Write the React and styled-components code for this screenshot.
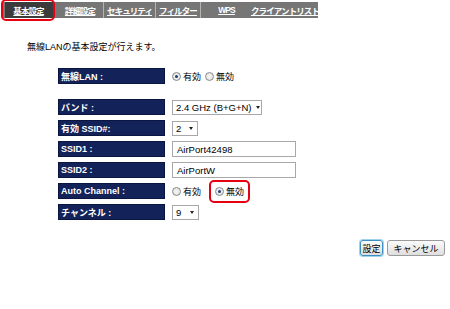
import React from "react";
import styled, { createGlobalStyle } from "styled-components";

const Global = createGlobalStyle`
  body {
    margin: 0;
    background: #fff;
    font-family: "Liberation Sans", "Noto Sans CJK JP", sans-serif;
    font-size: 9px;
    color: #000;
  }
`;

const Page = styled.div`
  width: 450px;
  height: 309px;
  position: relative;
  overflow: hidden;
`;

const TabBar = styled.div`
  display: flex;
  align-items: stretch;
  margin: 2px 0 0 3px;
  width: 315px;
  height: 16px;
  background: #767676;
`;

const Tab = styled.a`
  display: flex;
  align-items: center;
  justify-content: center;
  width: ${(p) => p.$w}px;
  flex: none;
  color: #fff;
  font-weight: bold;
  font-size: 8.5px;
  letter-spacing: -0.9px;
  text-decoration: underline;
  background: ${(p) => (p.$active ? "#3b3b3b" : "transparent")};
  border-right: 1px solid ${(p) => (p.$sep ? "#b4b4b4" : "transparent")};
  box-sizing: border-box;
  position: relative;
  white-space: nowrap;
  margin-left: ${(p) => p.$ml || 0}px;
`;

const Highlight = styled.span`
  position: absolute;
  left: -4px;
  top: -3px;
  right: -3px;
  bottom: -3px;
  border: 2px solid #e60012;
  border-radius: 5px;
`;

const Intro = styled.p`
  margin: 24px 0 0 27px;
  font-size: 9px;
  line-height: 11px;
`;

const Form = styled.div`
  margin: 15px 0 0 58px;
  display: grid;
  grid-template-columns: 107px auto;
  grid-template-rows: 16px 5px repeat(6, 16px);
  column-gap: 7px;
  row-gap: 5px;
  align-items: center;
`;

const Label = styled.div`
  height: 16px;
  background: #13235a;
  color: #fff;
  font-weight: bold;
  font-size: 9px;
  display: flex;
  align-items: center;
  padding-left: 2px;
  border: 1px solid #0a1540;
  box-sizing: border-box;
  white-space: nowrap;
`;

const Spacer = styled.div`
  grid-column: 1 / span 2;
`;

const Radios = styled.div`
  display: flex;
  align-items: center;
  gap: ${(p) => p.$gap || 4}px;
`;

const RadioLabel = styled.label`
  display: flex;
  align-items: center;
  gap: 2px;
  position: relative;
  font-size: 9px;
`;

const Dot = styled.span`
  width: 9px;
  height: 9px;
  border-radius: 50%;
  border: 1px solid #8a8a8a;
  background: radial-gradient(circle, #f6f6f6 0%, #dcdcdc 100%);
  box-sizing: border-box;
  display: flex;
  align-items: center;
  justify-content: center;
  &::after {
    content: "";
    width: 3px;
    height: 3px;
    border-radius: 50%;
    background: ${(p) => (p.$on ? "#1c3d7a" : "transparent")};
  }
`;

const RedBox = styled.span`
  position: absolute;
  left: -6px;
  top: -5px;
  right: -6px;
  bottom: -5px;
  border: 2px solid #e60012;
  border-radius: 5px;
`;

const Select = styled.div`
  height: 15px;
  width: ${(p) => p.$w}px;
  border: 1px solid #a8a8a8;
  background: #fff;
  box-sizing: border-box;
  display: flex;
  align-items: center;
  justify-content: space-between;
  gap: 4px;
  padding: 0 4px 0 3px;
  font-size: 9.5px;
  white-space: nowrap;
  &::after {
    content: "";
    flex: none;
    border-left: 2.5px solid transparent;
    border-right: 2.5px solid transparent;
    border-top: 3px solid #222;
  }
`;

const Input = styled.div`
  height: 16px;
  width: 124px;
  border: 1px solid #a8a8a8;
  box-sizing: border-box;
  display: flex;
  align-items: center;
  padding-left: 4px;
  font-size: 9.5px;
`;

const Buttons = styled.div`
  display: flex;
  justify-content: flex-end;
  gap: 4px;
  margin: 20px 5px 0 0;
`;

const Button = styled.button`
  height: 16px;
  width: ${(p) => p.$w}px;
  font-size: 9px;
  font-family: "Liberation Sans", "Noto Sans CJK JP", sans-serif;
  padding: 0;
  border: 1px solid ${(p) => (p.$focus ? "#3b8fc4" : "#9a9a9a")};
  border-radius: 3px;
  background: linear-gradient(#fbfbfb, #dedede);
  box-shadow: ${(p) => (p.$focus ? "0 0 0 1px #9fd0ee" : "none")};
  color: #000;
`;

export default function App() {
  return (
    <Page>
      <Global />
      <TabBar>
        <Tab $w={48} $active $ml={2}>
          基本設定
          <Highlight />
        </Tab>
        <Tab $w={47} $sep $ml={4}>詳細設定</Tab>
        <Tab $w={52} $sep>セキュリティ</Tab>
        <Tab $w={45} $sep>フィルター</Tab>
        <Tab $w={52}>WPS</Tab>
        <Tab $w={65}>クライアントリスト</Tab>
      </TabBar>
      <Intro>無線LANの基本設定が行えます。</Intro>
      <Form>
        <Label>無線LAN :</Label>
        <Radios>
          <RadioLabel><Dot $on />有効</RadioLabel>
          <RadioLabel><Dot />無効</RadioLabel>
        </Radios>
        <Spacer />
        <Label>バンド :</Label>
        <Select $w={90}>2.4 GHz (B+G+N)</Select>
        <Label>有効 SSID#:</Label>
        <Select $w={26}>2</Select>
        <Label>SSID1 :</Label>
        <Input>AirPort42498</Input>
        <Label>SSID2 :</Label>
        <Input>AirPortW</Input>
        <Label>Auto Channel :</Label>
        <Radios $gap={14}>
          <RadioLabel><Dot />有効</RadioLabel>
          <RadioLabel><Dot $on />無効<RedBox /></RadioLabel>
        </Radios>
        <Label>チャンネル :</Label>
        <Select $w={27}>9</Select>
      </Form>
      <Buttons>
        <Button $w={23} $focus>設定</Button>
        <Button $w={58}>キャンセル</Button>
      </Buttons>
    </Page>
  );
}
